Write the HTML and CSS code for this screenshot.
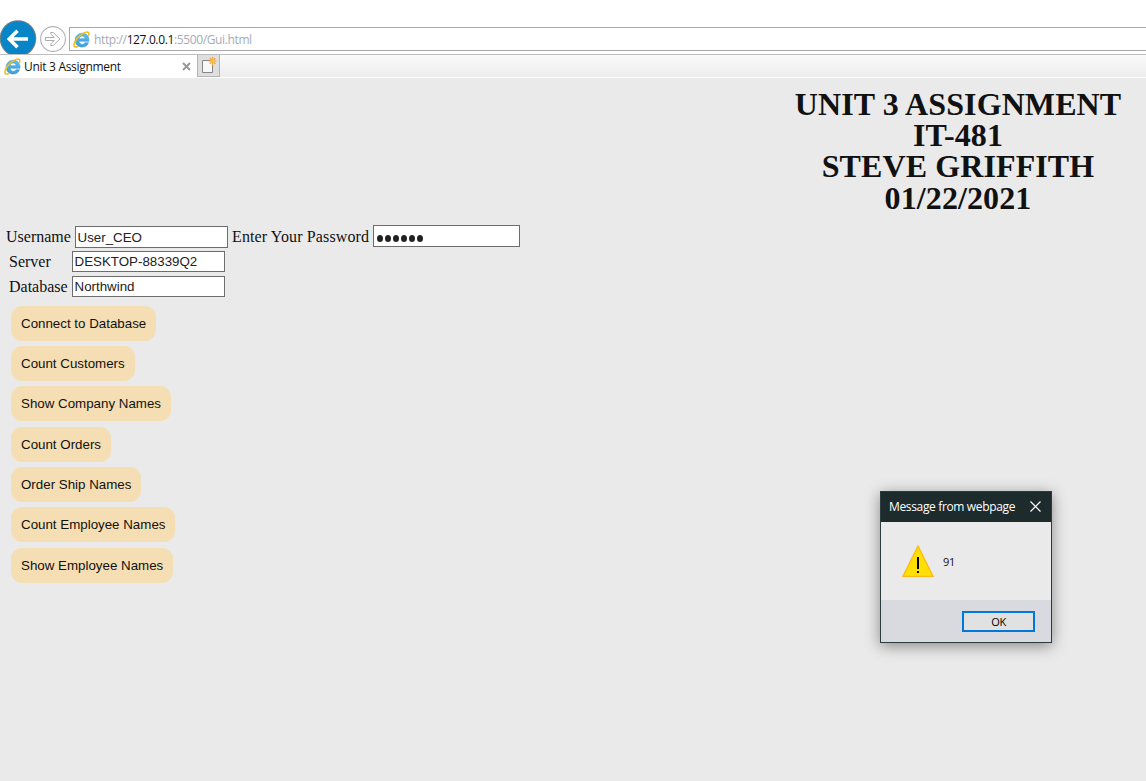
FILE: index.html
```
<!DOCTYPE html>
<html lang="en">
<head>
<meta charset="utf-8">
<title>Unit 3 Assignment</title>
<link rel="stylesheet" href="styles.css">
</head>
<body>
<svg class="defs" width="0" height="0" aria-hidden="true">
  <defs>
    <linearGradient id="blue" gradientUnits="userSpaceOnUse" x1="8" y1="2" x2="8" y2="15"><stop offset="0" stop-color="#5cc0f0"/><stop offset="1" stop-color="#3c9fe0"/></linearGradient>
    <symbol id="ie" viewBox="0 0 16 16">
      <path d="M14.6 11C13.7 13.6 11.5 15.1 8.7 15.1C4.8 15.1 2 12.4 2 8.7C2 4.9 4.9 2.1 8.7 2.1C12.8 2.1 15.3 5.1 15 9.6H5.7C5.8 11.5 7 12.5 8.8 12.5C9.9 12.5 10.8 12 11.2 11ZM5.8 7.3H11.4C11.2 5.6 10.2 4.7 8.7 4.7C7.1 4.7 6.1 5.6 5.8 7.3Z" fill="url(#blue)" fill-rule="evenodd" stroke="#2f8fd0" stroke-width=".5"/>
      <path d="M4.8 14.3C2.6 15.5.8 15.3.9 13.1C1.1 9.8 5.2 4.7 9.6 2.2C12.3.6 14.6.5 14.9 2.1C15 2.9 14.8 3.7 14.3 4.6" fill="none" stroke="#f7bd18" stroke-width="1.5"/>
    </symbol>
  </defs>
</svg>
<header class="toolbar">
  <svg class="back" viewBox="0 0 37 34"><circle cx="18" cy="18.5" r="18.3" fill="#777f85"/><circle cx="18" cy="18.5" r="17.3" fill="#0785c6"/><path d="M28 19H10M17.5 10.8L9.3 19l8.2 8.2" fill="none" stroke="#fff" stroke-width="3.6"/></svg>
  <svg class="forward" viewBox="0 0 27 27"><circle cx="14" cy="13" r="12.4" fill="#fff" stroke="#b2b2b2" stroke-width="1.1"/><path d="M6.5 11.5h8.7l-3.4-3.5V6.5h2.5l6.5 6.5-6.5 6.5h-2.5v-1.5l3.4-3.5H6.5z" fill="#fff" stroke="#aaa"/></svg>
  <div class="address"><svg class="ie"><use href="#ie"/></svg><span class="url">http://<b>127.0.0.1</b>:5500/Gui.html</span></div>
</header>
<nav class="tabs">
  <div class="tab"><svg class="ie"><use href="#ie"/></svg><span class="tab-title">Unit 3 Assignment</span><svg class="tab-close" viewBox="0 0 9 9"><path d="M1 1l7 7M8 1L1 8" stroke="#999" stroke-width="2"/></svg></div>
  <div class="new-tab"><svg viewBox="0 0 16 18"><path d="M.5 3.5h10v12h-10z" fill="#f8f8f8" stroke="#858585"/><path d="M10.5 0v8M6.5 4h8M7.7 1.2l5.6 5.6M13.3 1.2L7.7 6.8" stroke="#f2a22c" stroke-width="1.2"/><circle cx="10.5" cy="4" r="2" fill="#ffbd47"/></svg></div>
</nav>
<main class="page">
  <h1 class="heading">UNIT 3 ASSIGNMENT<br>IT-481<br>STEVE GRIFFITH<br>01/22/2021</h1>
  <form class="form">
    <div class="row credentials">
      <label class="user-label" for="user">Username</label><input id="user" type="text" value="User_CEO">
      <label class="pass-label" for="pass">Enter Your Password</label><div class="password" id="pass"><i></i><i></i><i></i><i></i><i></i><i></i></div>
    </div>
    <div class="row"><label for="server">Server</label><input id="server" type="text" value="DESKTOP-88339Q2"></div>
    <div class="row"><label for="db">Database</label><input id="db" type="text" value="Northwind"></div>
    <div class="actions">
      <button type="button">Connect to Database</button>
      <button type="button">Count Customers</button>
      <button type="button">Show Company Names</button>
      <button type="button">Count Orders</button>
      <button type="button">Order Ship Names</button>
      <button type="button">Count Employee Names</button>
      <button type="button">Show Employee Names</button>
    </div>
  </form>
</main>
<section class="dialog" role="alertdialog">
  <div class="dialog-bar"><span>Message from webpage</span><svg viewBox="0 0 11 11"><path d="M.5 .5l10 10M10.5 .5l-10 10" stroke="#fff" stroke-width="1.2"/></svg></div>
  <div class="dialog-body"><svg viewBox="0 0 32 32"><path d="M16 1L31 31.3H1z" fill="#ffe000" stroke="#ffb914" stroke-width="1.3"/><path d="M15 12h2v12h-2zM15 26h2v2h-2z" fill="#000"/></svg><span>91</span></div>
  <div class="dialog-foot"><button type="button">OK</button></div>
</section>
</body>
</html>
```
FILE: styles.css
```
* { box-sizing: border-box; }
body {
  margin: 0;
  height: 781px;
  overflow: hidden;
  background: #eaeaea;
  color: #111;
  font-family: "Liberation Serif", serif;
}
svg { display: block; flex: none; }
.defs { position: absolute; }

.toolbar {
  display: flex;
  height: 54px;
  background: #fff;
  font-family: "Open Sans", sans-serif;
}
.back { width: 37px; height: 34px; margin-top: 20px; }
.forward { width: 27px; height: 27px; margin: 26px 0 0 2px; }
.address {
  flex: 1;
  display: flex;
  align-items: center;
  height: 24px;
  margin: 27px 0 0 3px;
  padding-left: 3px;
  border: 1px solid #a9a9a9;
  border-right: 0;
}
.ie { width: 17px; height: 17px; }
.url {
  margin-left: 4px;
  padding-top: 1px;
  color: #a5abba;
  font-size: 12px;
  letter-spacing: -.37px;
  white-space: nowrap;
}
.url b { color: #111; font-weight: 400; }

.tabs {
  display: flex;
  height: 24px;
  border-top: 1px solid #bdbdbd;
  border-bottom: 1px solid #fff;
  background: linear-gradient(#fafafa, #ededed);
  font-family: "Open Sans", sans-serif;
}
.tab {
  display: flex;
  align-items: center;
  width: 197px;
  padding: 0 6px 0 4px;
  background: #fff;
}
.tab-title { margin-left: 3px; font-size: 12px; letter-spacing: -.3px; white-space: nowrap; }
.tab-close { width: 9px; height: 9px; margin-left: auto; }
.new-tab {
  width: 23px;
  padding: 2px 0 0 4px;
  border: 1px solid #b5b5b5;
  border-top: 0;
  background: #dedede;
}
.new-tab svg { width: 16px; height: 18px; }

.page { height: 703px; padding: 11px 0 0; }
.heading {
  width: 376px;
  margin: 0 0 0 auto;
  font-size: 32px;
  letter-spacing: .1px;
  line-height: 31.2px;
  text-align: center;
}
.form { margin-top: 10px; }
.row {
  display: flex;
  align-items: center;
  height: 25px;
  padding-left: 9px;
  font-size: 16px;
}
.row label { width: 63px; padding-top: 2px; white-space: nowrap; }
.row input, .password {
  width: 153px;
  height: 21px;
  margin: 0;
  padding: 0 1.5px;
  border: 1px solid #6d6d6d;
  border-radius: 0;
  background: #fff;
  color: #222;
  font: 13.33px "Liberation Sans", sans-serif;
}
.credentials { padding-left: 6px; }
.credentials input { height: 22px; margin-top: 1px; padding-top: 1px; }
.row .user-label { width: 69px; }
.row .pass-label { width: 141px; margin-left: 4px; letter-spacing: .13px; }
.row .password {
  display: flex;
  align-items: center;
  gap: 2px;
  width: 147px;
  height: 22px;
  margin-top: -1px;
  padding: 5px 3px 0;
}
.password i { width: 6px; height: 7px; border-radius: 50%; background: #222; }

.actions {
  display: flex;
  flex-direction: column;
  align-items: flex-start;
  gap: 5.3px;
  margin: 7px 0 0 11px;
}
.actions button {
  height: 35px;
  padding: 0 10px;
  border: 0;
  border-radius: 11px;
  background: #f5deb3;
  color: #111;
  font: 13.33px "Liberation Sans", sans-serif;
}

.dialog {
  position: absolute;
  left: 880px;
  top: 491px;
  width: 172px;
  height: 152px;
  border: 1px solid #2c3b3d;
  background: #eaeaea;
  box-shadow: 0 3px 14px rgba(0, 0, 0, .42);
  color: #111;
  font: 12px "Open Sans", sans-serif;
}
.dialog-bar {
  display: flex;
  align-items: center;
  justify-content: space-between;
  height: 30px;
  padding: 0 10px 2px 8px;
  background: #1e2b2d;
  color: #fff;
  letter-spacing: -.35px;
  white-space: nowrap;
}
.dialog-bar svg { width: 11px; height: 11px; }
.dialog-body {
  display: flex;
  align-items: center;
  height: 78px;
  padding-left: 21px;
  font-size: 11px;
}
.dialog-body svg { width: 32px; height: 32px; }
.dialog-body span { margin-left: 9px; letter-spacing: -.2px; }
.dialog-foot {
  display: flex;
  justify-content: flex-end;
  height: 42px;
  padding: 11px 16px 0 0;
  background: #d9dae0;
}
.dialog-foot button {
  width: 73px;
  height: 21px;
  padding: 0;
  border: 2px solid #0078d7;
  background: #e1e1e1;
  color: #000;
  font: 11px "Open Sans", sans-serif;
  letter-spacing: -.3px;
}
```
